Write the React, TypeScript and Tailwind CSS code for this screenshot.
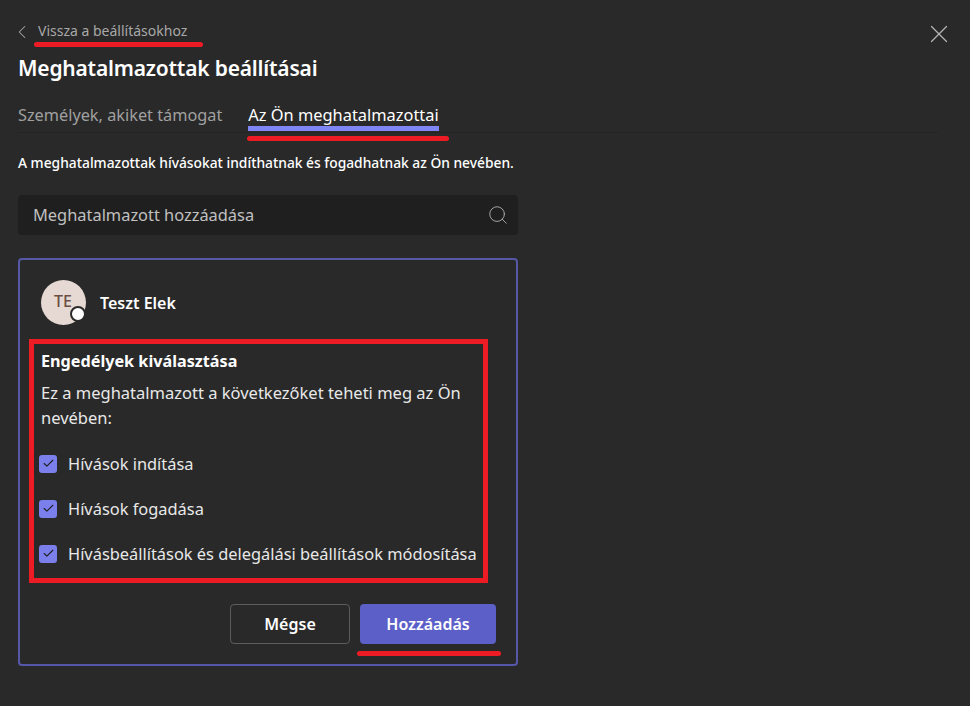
import { ChevronLeft, Search, X, Check } from 'lucide-react';

const font = { fontFamily: '"Noto Sans", sans-serif' };

function Permission({ label }: { label: string }) {
  return (
    <div className="flex items-center h-[45px]">
      <span className="flex items-center justify-center w-[18px] h-[18px] rounded-[3px] bg-[#7b7fec] mr-[11px] -ml-[2px]">
        <Check size={13} strokeWidth={2} className="text-[#1f1f1f]" />
      </span>
      <span className="pt-[2px] text-[16.4px] text-[#e8e8e8]">{label}</span>
    </div>
  );
}

export default function App() {
  return (
    <div className="relative w-[970px] h-[706px] overflow-hidden bg-[#292929] px-[18px]" style={font}>
      <X size={30} strokeWidth={1} className="absolute right-[16px] top-[19px] text-[#b5b5b5]" />

      <div className="flex items-center h-[22px] mt-[19px]">
        <ChevronLeft size={22} strokeWidth={1.1} className="mt-[4px] text-[#a8a8a8] -ml-[7px] mr-[5px]" />
        <span className="relative pt-[2px] text-[14px] leading-[22px] text-[#a8a8a8]">
          Vissza a beállításokhoz
          <span className="absolute -left-[4px] -right-[16px] top-[24px] h-[5px] rounded-full bg-[#ed1c24]" />
        </span>
      </div>

      <h1 className="mt-[13px] h-[28px] leading-[28px] text-[21px] font-semibold text-white tracking-[-0.2px]">
        Meghatalmazottak beállításai
      </h1>

      <div className="mt-[21px] flex items-start gap-[26px] w-[920px] h-[30px] border-b border-[#242424]">
        <span className="text-[16.3px] text-[#a0a0a0] leading-[24px]">Személyek, akiket támogat</span>
        <span className="relative h-[28px] text-[16.4px] text-white leading-[24px] border-b-[5px] border-[#7f85f5]">
          Az Ön meghatalmazottai
          <span className="absolute -left-[1px] -right-[10px] top-[33px] h-[5px] rounded-full bg-[#ed1c24]" />
        </span>
      </div>

      <p className="mt-[20px] h-[20px] leading-[20px] text-[13.8px] font-medium text-white">
        A meghatalmazottak hívásokat indíthatnak és fogadhatnak az Ön nevében.
      </p>

      <div className="mt-[22px] flex items-center justify-between w-[500px] h-[40px] rounded-[4px] bg-[#1f1f1f] pl-[15px] pr-[9px]">
        <span className="text-[16.4px] text-[#c0c0c0]">Meghatalmazott hozzáadása</span>
        <Search size={22} strokeWidth={1} className="text-[#b0b0b0]" />
      </div>

      <div className="mt-[23px] w-[500px] h-[408px] rounded-[4px] border-2 border-[#5558a8] pt-[20px] pl-[9px] pr-[20px]">
        <div className="flex items-center h-[45px] pl-[12px]">
          <div className="relative flex items-center justify-center w-[45px] h-[45px] rounded-full bg-[#e6d8d2] text-[#6b4f44] text-[16px] font-medium">
            <span className="-mt-[3px] -ml-[1px]">TE</span>
            <span className="absolute right-0 bottom-[3px] w-[16px] h-[16px] rounded-full bg-white border-[2px] border-[#292929]" />
          </div>
          <span className="ml-[14px] text-[16px] font-semibold text-white">Teszt Elek</span>
        </div>

        <div className="mt-[14px] w-[459px] h-[244px] border-[5px] border-[#ed1c24] pl-[7px] pt-[5px]">
          <p className="h-[24px] leading-[24px] text-[16.2px] font-bold text-white">Engedélyek kiválasztása</p>
          <p className="mt-[7px] leading-[25px] text-[16.5px] text-[#e8e8e8] w-[430px]">
            Ez a meghatalmazott a következőket teheti meg az Ön nevében:
          </p>
          <div className="mt-[11px]">
            <Permission label="Hívások indítása" />
            <Permission label="Hívások fogadása" />
            <Permission label="Hívásbeállítások és delegálási beállítások módosítása" />
          </div>
        </div>

        <div className="mt-[21px] flex justify-end gap-[10px]">
          <button className="w-[120px] h-[40px] rounded-[4px] border border-[#5c5c5c] text-[16px] font-semibold text-white">
            Mégse
          </button>
          <button className="relative w-[136px] h-[40px] rounded-[4px] bg-[#5b5fc7] text-[16px] font-semibold text-white">
            Hozzáadás
            <span className="absolute -left-[3px] -right-[5px] top-[47px] h-[5px] rounded-full bg-[#ed1c24]" />
          </button>
        </div>
      </div>
    </div>
  );
}
